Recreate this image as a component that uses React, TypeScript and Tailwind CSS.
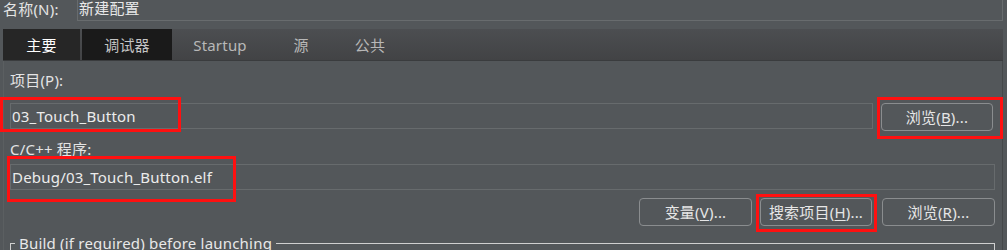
import React from "react";

const Btn = ({ w, children }: { w: string; children: React.ReactNode }) => (
  <div
    className={`${w} h-[28px] shrink-0 flex items-center justify-center rounded-[4px] border border-[#8a8d8f] text-[#e6e6e6]`}
  >
    {children}
  </div>
);

const U = ({ children }: { children: React.ReactNode }) => (
  <span className="underline underline-offset-[2px] decoration-1">{children}</span>
);

export default function App() {
  return (
    <div
      className="relative w-[1007px] h-[250px] overflow-hidden bg-[#53575a] text-[15px] tracking-[0.2px] text-[#e4e4e4]"
      style={{ fontFamily: '"Noto Sans", "Noto Sans CJK SC", sans-serif' }}
    >
      {/* name row */}
      <div className="flex items-start h-[21px]">
        <div className="w-[77px] pl-[3px] leading-[18px] text-[#e4e4e4]">名称(N):</div>
        <div className="w-[926px] h-[25px] -mt-[4px] border border-[#686c6e] pl-[1px] leading-[23px] text-[#e8e8e8]">
          新建配置
        </div>
      </div>

      {/* tab folder */}
      <div className="mt-[8px] ml-[3px] w-[1000px] flex flex-col">
        <div className="flex h-[32px] bg-gradient-to-b from-[#4c4e51] to-[#424345] border-b border-[#3a3c3e]">
          <div className="w-[77px] h-full bg-[#262626] text-white flex items-center justify-center pt-[2px]">主要</div>
          <div className="w-[90px] ml-[2px] h-full bg-[#1a1a1a] text-[#c4c4c4] flex items-center justify-center pt-[2px]">调试器</div>
          <div className="w-[96px] h-full text-[#b8b8b8] flex items-center justify-center pt-[2px]">Startup</div>
          <div className="w-[66px] h-full text-[#b8b8b8] flex items-center justify-center pt-[2px]">源</div>
          <div className="w-[72px] h-full text-[#b8b8b8] flex items-center justify-center pt-[2px]">公共</div>
        </div>

        <div className="h-[200px] border-l border-[#5b5f61] border-r border-r-[#45484a] pl-[6px] pr-[6px] flex flex-col">
          <div className="mt-[9px] leading-[20px]">项目(P):</div>
          <div className="mt-[13px] flex items-start">
            <div className="w-[863px] h-[26px] border border-[#676b6d] pl-[1px] leading-[24px] text-[#ececec]">
              03_Touch_Button
            </div>
            <div className="ml-[8px]">
              <Btn w="w-[112px]">
                浏览(<U>B</U>)...
              </Btn>
            </div>
          </div>
          <div className="mt-[8px] leading-[20px]">C/C++ 程序:</div>
          <div className="mt-[5px] w-[985px] h-[26px] border border-[#676b6d] pl-[1px] leading-[24px] text-[#ececec]">
            Debug/03_Touch_Button.elf
          </div>
          <div className="mt-[8px] w-[985px] flex justify-end">
            <Btn w="w-[113px]">
              变量(<U>V</U>)...
            </Btn>
            <div className="ml-[8px]">
              <Btn w="w-[112px]">
                搜索项目(<U>H</U>)...
              </Btn>
            </div>
            <div className="ml-[10px]">
              <Btn w="w-[113px]">
                浏览(<U>R</U>)...
              </Btn>
            </div>
          </div>
          <div className="mt-[9px] w-[985px] flex items-start h-[30px]">
            <div className="w-[5px] h-[30px] mt-[8px] border-t border-l border-[#cfcfcf]" />
            <div className="px-[4px] leading-[16px] text-[#e8e8e8]">Build (if required) before launching</div>
            <div className="flex-1 h-[30px] mt-[8px] border-t border-r border-[#cfcfcf]" />
          </div>
        </div>
      </div>

      {/* red annotation boxes */}
      <div className="absolute left-[0px] top-[97px] w-[181px] h-[35px] border-[3px] border-[#ff1010]" />
      <div className="absolute left-[877px] top-[97px] w-[126px] h-[42px] border-[3px] border-[#ff1010]" />
      <div className="absolute left-[7px] top-[156px] w-[229px] h-[46px] border-[3px] border-[#ff1010]" />
      <div className="absolute left-[756px] top-[194px] w-[121px] h-[38px] border-[3px] border-[#ff1010]" />
    </div>
  );
}
